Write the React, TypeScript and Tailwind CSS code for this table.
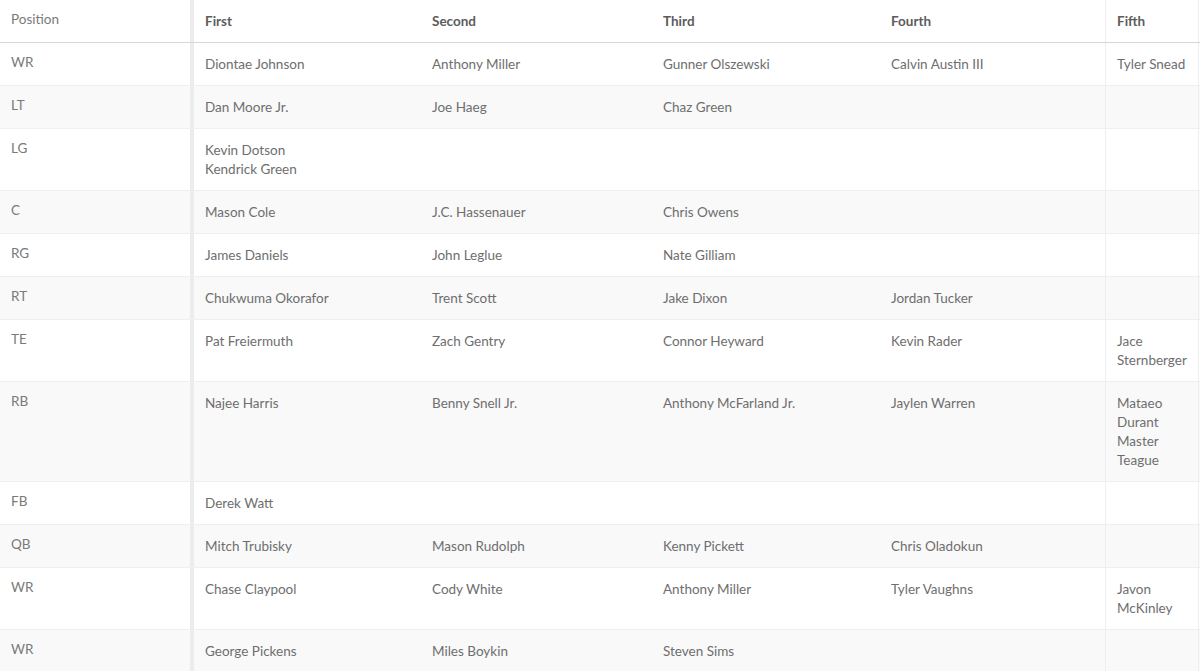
const rows: { pos: string; players: string[][] }[] = [
  { pos: "WR", players: [["Diontae Johnson"], ["Anthony Miller"], ["Gunner Olszewski"], ["Calvin Austin III"], ["Tyler Snead"]] },
  { pos: "LT", players: [["Dan Moore Jr."], ["Joe Haeg"], ["Chaz Green"], [], []] },
  { pos: "LG", players: [["Kevin Dotson", "Kendrick Green"], [], [], [], []] },
  { pos: "C", players: [["Mason Cole"], ["J.C. Hassenauer"], ["Chris Owens"], [], []] },
  { pos: "RG", players: [["James Daniels"], ["John Leglue"], ["Nate Gilliam"], [], []] },
  { pos: "RT", players: [["Chukwuma Okorafor"], ["Trent Scott"], ["Jake Dixon"], ["Jordan Tucker"], []] },
  { pos: "TE", players: [["Pat Freiermuth"], ["Zach Gentry"], ["Connor Heyward"], ["Kevin Rader"], ["Jace Sternberger"]] },
  { pos: "RB", players: [["Najee Harris"], ["Benny Snell Jr."], ["Anthony McFarland Jr."], ["Jaylen Warren"], ["Mataeo Durant", "Master Teague"]] },
  { pos: "FB", players: [["Derek Watt"], [], [], [], []] },
  { pos: "QB", players: [["Mitch Trubisky"], ["Mason Rudolph"], ["Kenny Pickett"], ["Chris Oladokun"], []] },
  { pos: "WR", players: [["Chase Claypool"], ["Cody White"], ["Anthony Miller"], ["Tyler Vaughns"], ["Javon McKinley"]] },
  { pos: "WR", players: [["George Pickens"], ["Miles Boykin"], ["Steven Sims"], [], []] },
];

const headers = ["First", "Second", "Third", "Fourth", "Fifth"];

const grid = "grid grid-cols-[194px_227px_231px_228px_225px_94px]";

export default function App() {
  return (
    <div className="w-[1200px] bg-white text-[13.5px] leading-[19px] text-[#6e6e6e]" style={{ fontFamily: "Lato, 'Open Sans', sans-serif" }}>
      <div className={`${grid} border-b border-[#d6d6d6]`}>
        <div className="border-r-4 border-[#ececec] pl-[11px] pt-[10px] pb-[13px] text-[#7a7a7a]">Position</div>
        {headers.map((h, i) => (
          <div
            key={h}
            className={`px-[11px] pt-[12px] pb-[11px] font-bold text-[#5c5c5c] ${i === 4 ? "border-x border-[#eeeeee]" : ""}`}
          >
            {h}
          </div>
        ))}
      </div>
      {rows.map((r, ri) => (
        <div key={ri} className={`${grid} border-b border-[#efefef] ${ri % 2 === 1 ? "bg-[#f9f9f9]" : "bg-white"}`}>
          <div className="border-r-4 border-[#ececec] pl-[11px] pt-[10px] text-[#7a7a7a]">{r.pos}</div>
          {r.players.map((names, ci) => (
            <div
              key={ci}
              className={`px-[11px] pt-[12px] pb-[11px] ${ci === 4 ? "border-x border-[#eeeeee]" : ""}`}
            >
              {names.map((n) => (
                <div key={n}>{n}</div>
              ))}
            </div>
          ))}
        </div>
      ))}
    </div>
  );
}
